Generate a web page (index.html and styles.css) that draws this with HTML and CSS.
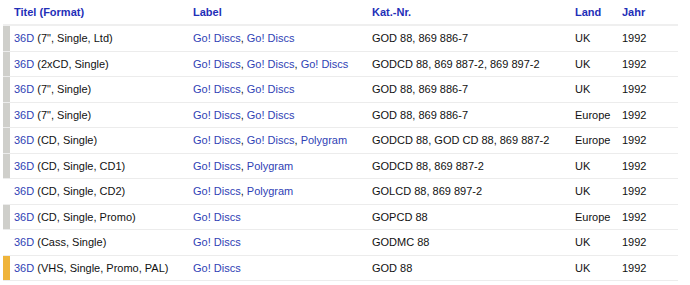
FILE: index.html
```html
<!DOCTYPE html>
<html lang="de">
<head>
<meta charset="utf-8">
<link rel="stylesheet" href="styles.css">
</head>
<body>
<table class="rel">
  <colgroup>
    <col class="c1"><col class="c2"><col class="c3"><col class="c4"><col class="c5">
  </colgroup>
  <thead>
    <tr><th class="first">Titel (Format)</th><th>Label</th><th>Kat.-Nr.</th><th>Land</th><th>Jahr</th></tr>
  </thead>
  <tbody>
    <tr><td class="first grey"><a href="#">36D</a> (7", Single, Ltd)</td><td><a href="#">Go! Discs</a>, <a href="#">Go! Discs</a></td><td>GOD 88, 869 886-7</td><td>UK</td><td>1992</td></tr>
    <tr><td class="first grey"><a href="#">36D</a> (2xCD, Single)</td><td><a href="#">Go! Discs</a>, <a href="#">Go! Discs</a>, <a href="#">Go! Discs</a></td><td>GODCD 88, 869 887-2, 869 897-2</td><td>UK</td><td>1992</td></tr>
    <tr><td class="first grey"><a href="#">36D</a> (7", Single)</td><td><a href="#">Go! Discs</a>, <a href="#">Go! Discs</a></td><td>GOD 88, 869 886-7</td><td>UK</td><td>1992</td></tr>
    <tr><td class="first grey"><a href="#">36D</a> (7", Single)</td><td><a href="#">Go! Discs</a>, <a href="#">Go! Discs</a></td><td>GOD 88, 869 886-7</td><td>Europe</td><td>1992</td></tr>
    <tr><td class="first grey"><a href="#">36D</a> (CD, Single)</td><td><a href="#">Go! Discs</a>, <a href="#">Go! Discs</a>, <a href="#">Polygram</a></td><td>GODCD 88, GOD CD 88, 869 887-2</td><td>Europe</td><td>1992</td></tr>
    <tr><td class="first grey"><a href="#">36D</a> (CD, Single, CD1)</td><td><a href="#">Go! Discs</a>, <a href="#">Polygram</a></td><td>GODCD 88, 869 887-2</td><td>UK</td><td>1992</td></tr>
    <tr><td class="first"><a href="#">36D</a> (CD, Single, CD2)</td><td><a href="#">Go! Discs</a>, <a href="#">Polygram</a></td><td>GOLCD 88, 869 897-2</td><td>UK</td><td>1992</td></tr>
    <tr><td class="first grey"><a href="#">36D</a> (CD, Single, Promo)</td><td><a href="#">Go! Discs</a></td><td>GOPCD 88</td><td>Europe</td><td>1992</td></tr>
    <tr><td class="first"><a href="#">36D</a> (Cass, Single)</td><td><a href="#">Go! Discs</a></td><td>GODMC 88</td><td>UK</td><td>1992</td></tr>
    <tr><td class="first gold"><a href="#">36D</a> (VHS, Single, Promo, PAL)</td><td><a href="#">Go! Discs</a></td><td>GOD 88</td><td>UK</td><td>1992</td></tr>
  </tbody>
</table>
</body>
</html>
```

FILE: styles.css
```css
html, body {
  margin: 0;
  padding: 0;
  background: #fff;
}
body {
  padding: 0 0 0 3px;
  font-family: "Liberation Sans", Arial, sans-serif;
  font-size: 11px;
  color: #111;
}
.rel {
  border-collapse: collapse;
  table-layout: fixed;
  width: 675px;
}
.c1 { width: 186px; }
.c2 { width: 179px; }
.c3 { width: 203px; }
.c4 { width: 47px; }
.c5 { width: 60px; }
.rel th {
  text-align: left;
  font-weight: bold;
  color: #1f2fb8;
  height: 24px;
  padding: 0 4px;
  border-bottom: 2px solid #efefef;
  vertical-align: middle;
}
.rel td {
  height: 24.5px;
  padding: 0 4px;
  border-bottom: 1px solid #ececec;
  vertical-align: middle;
  white-space: nowrap;
}
.rel .first {
  padding-left: 11px;
}
.rel td.grey { box-shadow: inset 7px 0 0 #cfcfcb; }
.rel td.gold { box-shadow: inset 7px 0 0 #efb43a; }
.rel a {
  color: #2f3fb5;
  text-decoration: none;
}
```
